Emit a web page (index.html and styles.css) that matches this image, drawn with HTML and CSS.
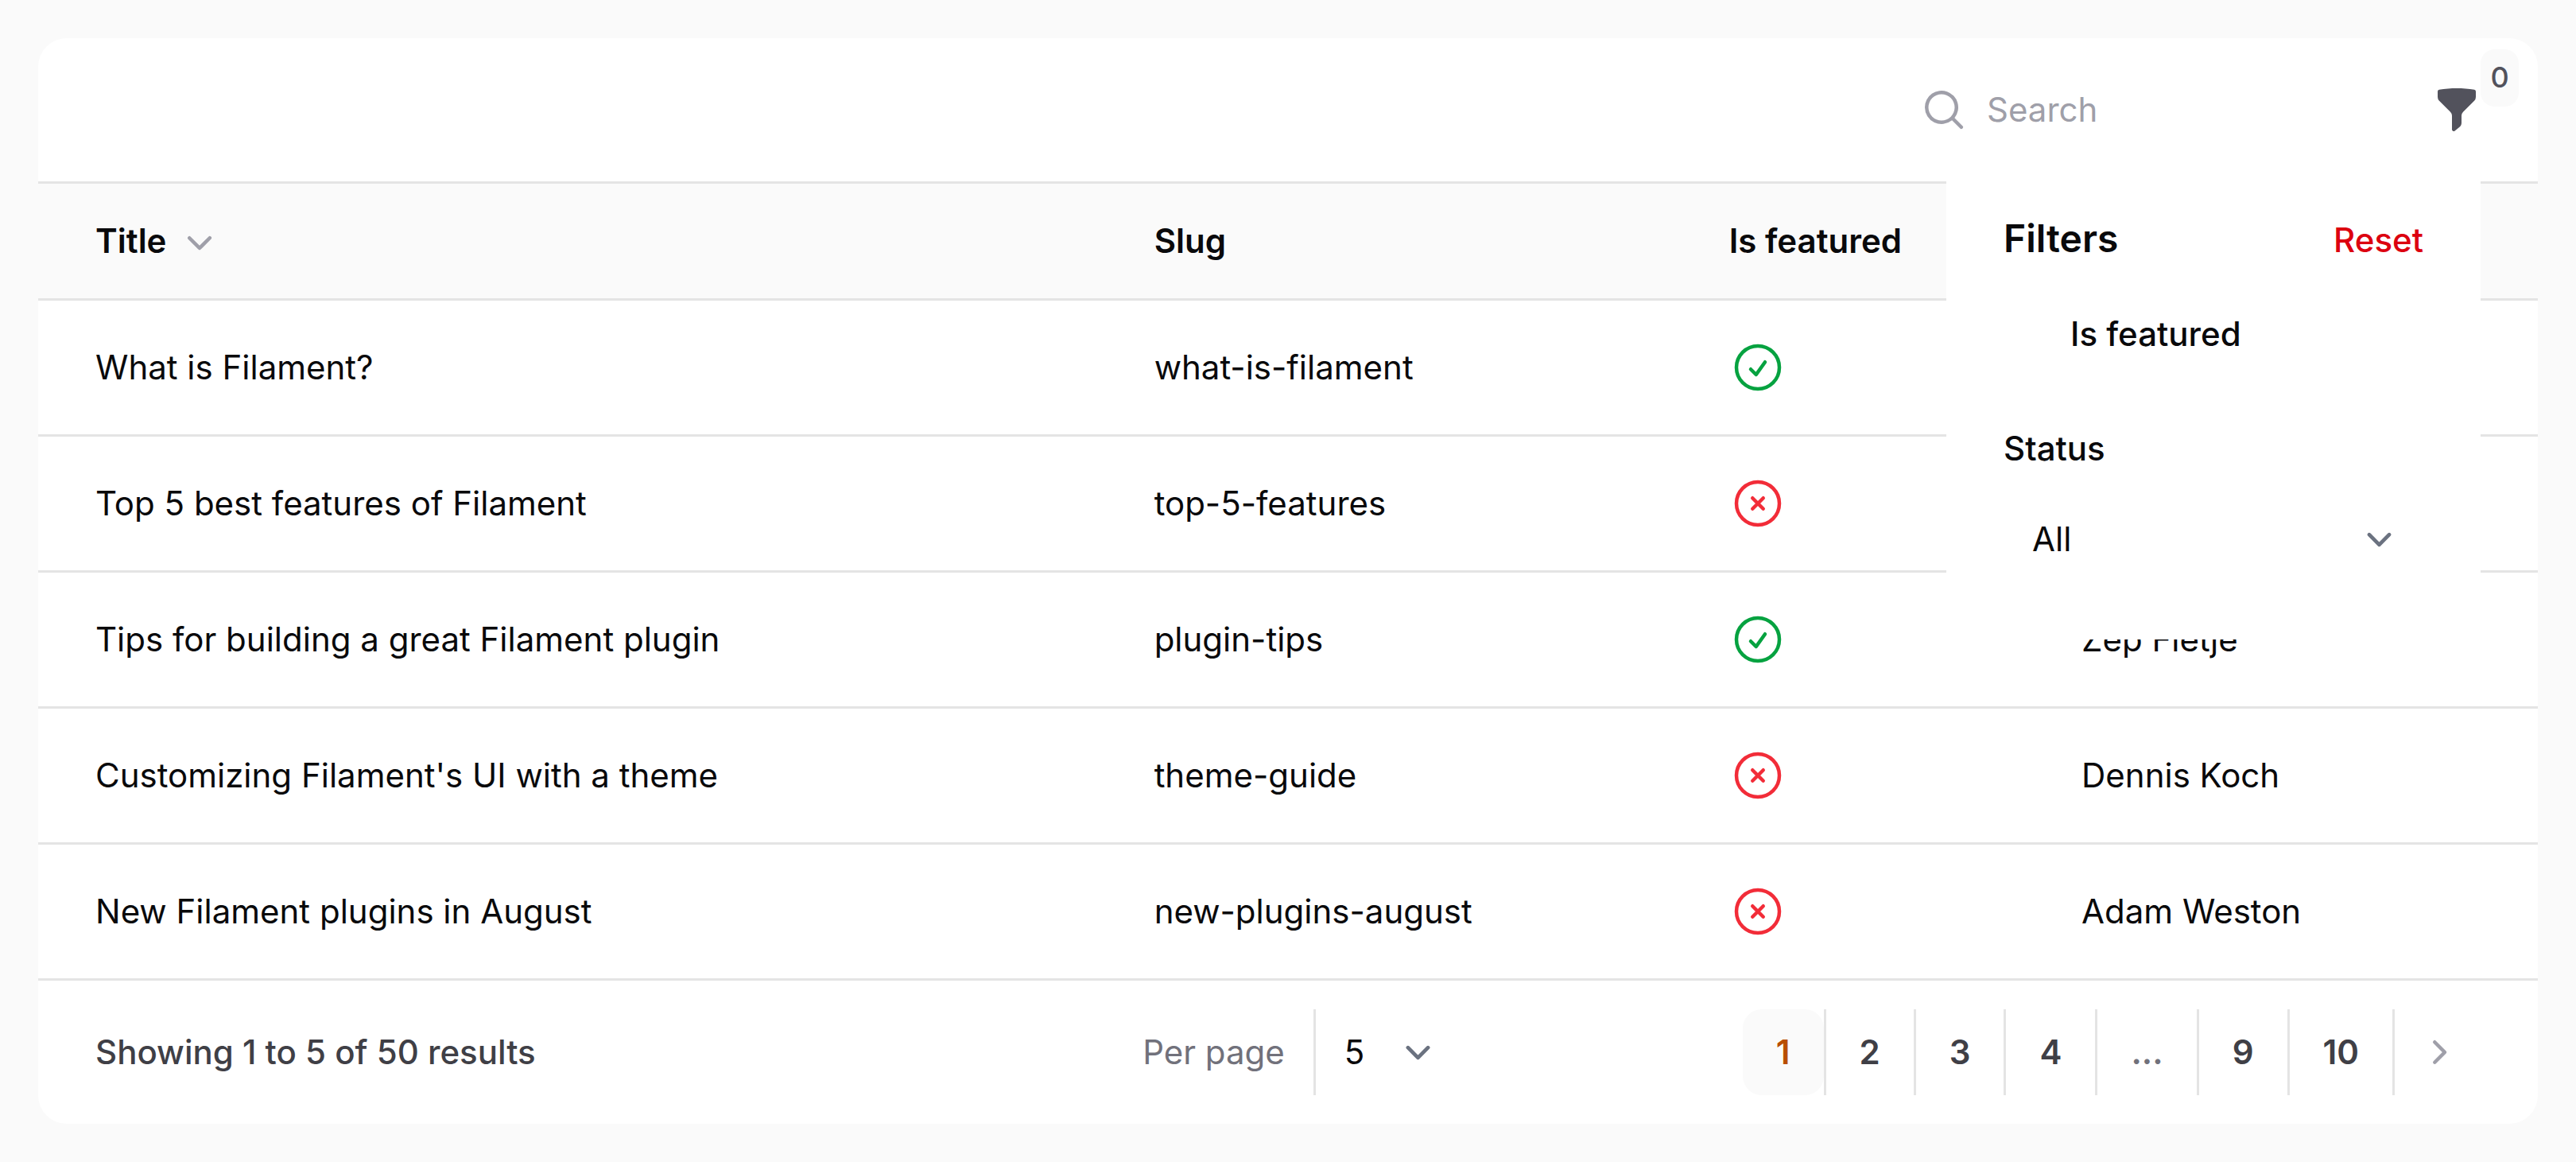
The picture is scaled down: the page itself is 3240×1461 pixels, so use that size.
FILE: index.html
```html
<!DOCTYPE html>
<html lang="en">
<head>
<meta charset="utf-8">
<meta name="viewport" content="width=device-width, initial-scale=1">
<title>Posts</title>
<link rel="stylesheet" href="styles.css">
</head>
<body>
<svg class="sprite" aria-hidden="true">
  <symbol id="check" viewBox="0 0 24 24"><path d="M9 12.75 11.25 15 15 9.75M21 12a9 9 0 1 1-18 0 9 9 0 0 1 18 0Z"/></symbol>
  <symbol id="cross" viewBox="0 0 24 24"><path d="m9.75 9.75 4.5 4.5m0-4.5-4.5 4.5M21 12a9 9 0 1 1-18 0 9 9 0 0 1 18 0Z"/></symbol>
  <symbol id="select-arrow" viewBox="0 0 20 20"><path d="m6 8 4 4 4-4"/></symbol>
</svg>
<main class="card">
  <div class="toolbar">
    <label class="search">
      <svg class="icon" viewBox="0 0 20 20" aria-hidden="true"><path fill-rule="evenodd" d="M9 3.5a5.5 5.5 0 1 0 0 11 5.5 5.5 0 0 0 0-11ZM2 9a7 7 0 1 1 12.452 4.391l3.328 3.329a.75.75 0 1 1-1.06 1.06l-3.329-3.328A7 7 0 0 1 2 9Z"/></svg>
      <input class="search-input" type="search" placeholder="Search" aria-label="Search">
    </label>
    <div class="filter">
      <button class="filter-button" type="button" aria-label="Filter" aria-expanded="true">
        <svg class="icon" viewBox="0 0 20 20" aria-hidden="true"><path d="M2.628 1.601C5.028 1.206 7.49 1 10 1s4.973.206 7.372.601a.75.75 0 0 1 .628.74v2.288a2.25 2.25 0 0 1-.659 1.59l-4.682 4.683a2.25 2.25 0 0 0-.659 1.59v3.037c0 .684-.31 1.33-.844 1.757l-1.937 1.55A.75.75 0 0 1 8 18.25v-5.757a2.25 2.25 0 0 0-.659-1.591L2.659 6.22A2.25 2.25 0 0 1 2 4.629V2.34a.75.75 0 0 1 .628-.74Z"/></svg>
        <span class="badge">0</span>
      </button>
      <section class="dropdown" aria-labelledby="filters-heading">
        <header class="dropdown-header">
          <h2 class="dropdown-title" id="filters-heading">Filters</h2>
          <button class="reset" type="button">Reset</button>
        </header>
        <label class="check-field">
          <input class="checkbox" type="checkbox">
          <span>Is featured</span>
        </label>
        <div class="select-field">
          <label class="field-label" for="status">Status</label>
          <div class="select-wrap">
            <select class="select" id="status"><option>All</option></select>
            <svg class="select-arrow" aria-hidden="true"><use href="#select-arrow"/></svg>
          </div>
        </div>
      </section>
    </div>
  </div>

  <table class="table">
    <colgroup><col class="col-title"><col class="col-slug"><col class="col-featured"><col></colgroup>
    <thead>
      <tr>
        <th scope="col"><button class="sort" type="button">Title
          <svg class="icon sort-icon" viewBox="0 0 20 20" aria-hidden="true"><path d="M5.22 8.22a.75.75 0 0 1 1.06 0L10 11.94l3.72-3.72a.75.75 0 1 1 1.06 1.06l-4.25 4.25a.75.75 0 0 1-1.06 0L5.22 9.28a.75.75 0 0 1 0-1.06Z"/></svg></button></th>
        <th scope="col">Slug</th>
        <th scope="col">Is featured</th>
        <td></td>
      </tr>
    </thead>
    <tbody>
      <tr>
        <td>What is Filament?</td>
        <td>what-is-filament</td>
        <td><svg class="state yes" role="img" aria-label="Yes"><use href="#check"/></svg></td>
        <td></td>
      </tr>
      <tr>
        <td>Top 5 best features of Filament</td>
        <td>top-5-features</td>
        <td><svg class="state no" role="img" aria-label="No"><use href="#cross"/></svg></td>
        <td></td>
      </tr>
      <tr>
        <td>Tips for building a great Filament plugin</td>
        <td>plugin-tips</td>
        <td><svg class="state yes" role="img" aria-label="Yes"><use href="#check"/></svg></td>
        <td>Zep Fietje</td>
      </tr>
      <tr>
        <td>Customizing Filament's UI with a theme</td>
        <td>theme-guide</td>
        <td><svg class="state no" role="img" aria-label="No"><use href="#cross"/></svg></td>
        <td>Dennis Koch</td>
      </tr>
      <tr>
        <td>New Filament plugins in August</td>
        <td>new-plugins-august</td>
        <td><svg class="state no" role="img" aria-label="No"><use href="#cross"/></svg></td>
        <td>Adam Weston</td>
      </tr>
    </tbody>
  </table>

  <footer class="footer">
    <span class="overview">Showing 1 to 5 of 50 results</span>
    <div class="per-page">
      <label class="per-page-label" for="per-page">Per page</label>
      <div class="select-wrap">
        <select class="select" id="per-page"><option>5</option></select>
        <svg class="select-arrow" aria-hidden="true"><use href="#select-arrow"/></svg>
      </div>
    </div>
    <nav class="pages" aria-label="Pagination">
      <a class="page current" href="#1" aria-current="page">1</a>
      <a class="page" href="#2">2</a>
      <a class="page" href="#3">3</a>
      <a class="page" href="#4">4</a>
      <span class="page ellipsis">...</span>
      <a class="page" href="#9">9</a>
      <a class="page" href="#10">10</a>
      <a class="page next" href="#2" aria-label="Next"><svg class="icon" viewBox="0 0 20 20" aria-hidden="true"><path d="M8.22 5.22a.75.75 0 0 1 1.06 0l4.25 4.25a.75.75 0 0 1 0 1.06l-4.25 4.25a.75.75 0 0 1-1.06-1.06L11.94 10 8.22 6.28a.75.75 0 0 1 0-1.06Z"/></svg></a>
    </nav>
  </footer>
</main>
</body>
</html>
```

FILE: styles.css
```css
*, *::before, *::after { box-sizing: border-box; }

body {
  margin: 0;
  padding: 48px;
  background: #fafafa;
  color: #09090b;
  font-family: Inter, "Liberation Sans", sans-serif;
  font-size: 42px;
  line-height: 72px;
  font-optical-sizing: none;
  -webkit-font-smoothing: antialiased;
}

button, input, select {
  margin: 0;
  padding: 0;
  border: 0;
  background: transparent;
  color: inherit;
  font: inherit;
  font-optical-sizing: inherit;
}

.sprite { display: none; }

.icon {
  display: block;
  flex: none;
  width: 60px;
  height: 60px;
  fill: currentColor;
}

.card { border-radius: 36px; background: #fff; }

/* Toolbar */
.toolbar {
  display: flex;
  justify-content: flex-end;
  align-items: center;
  gap: 48px;
  padding: 36px 72px;
}

.search {
  display: flex;
  align-items: center;
  gap: 24px;
  width: 633px;
  height: 108px;
  padding: 0 36px;
  color: #9f9fa9;
}

.search-input { flex: 1; min-width: 0; line-height: 72px; outline: 0; color: #09090b; }
.search-input::placeholder { color: #9f9fa9; opacity: 1; }

.filter { position: relative; }
.filter-button { display: block; padding: 24px 0; color: #52525c; }

.badge {
  position: absolute;
  top: -22px;
  left: 100%;
  min-width: 48px;
  height: 72px;
  border-radius: 18px;
  background: #fafafa;
  font-size: 36px;
  font-weight: 500;
  line-height: 70px;
  text-align: center;
}

.dropdown {
  position: absolute;
  z-index: 1;
  top: 100%;
  right: 0;
  width: 672px;
  padding: 72px;
  background: #fff;
}

.dropdown-header { display: flex; justify-content: space-between; align-items: baseline; margin-bottom: 48px; }
.dropdown-title { margin: 0; font-size: 48px; font-weight: 600; line-height: 72px; }
.reset { color: #dc000f; font-weight: 500; line-height: 60px; }

.check-field { display: flex; align-items: center; gap: 36px; margin-bottom: 72px; font-weight: 500; }
.checkbox { width: 48px; height: 48px; appearance: none; border-radius: 12px; }
.field-label { display: block; margin-bottom: 24px; font-weight: 500; }

/* The arrow shares the select's grid cell */
.select-wrap { display: grid; align-items: center; }
.select { grid-area: 1 / 1; width: 100%; height: 108px; padding: 0 96px 0 36px; appearance: none; }

.select-arrow {
  grid-area: 1 / 1;
  justify-self: end;
  width: 63px;
  height: 63px;
  margin-right: 24px;
  fill: none;
  stroke: #6b7280;
  stroke-width: 1.5;
  stroke-linecap: round;
  stroke-linejoin: round;
  pointer-events: none;
}

/* Table */
.table { width: 100%; table-layout: fixed; border-collapse: separate; border-spacing: 0; text-align: left; }
.col-title { width: 43.5%; }
.col-slug { width: 23%; }
.col-featured { width: 14.1%; }

.table th, .table td { padding: 48px 36px; border-top: 3px solid #e4e4e4; vertical-align: middle; }
.table th:first-child, .table td:first-child { padding-left: 72px; }
.table thead th, .table thead td { padding-top: 36px; padding-bottom: 36px; background: #fafafa; font-weight: 600; }

.sort { display: flex; align-items: center; gap: 12px; }
.sort-icon { color: #9f9fa9; }

.state {
  display: block;
  width: 72px;
  height: 72px;
  fill: none;
  stroke: currentColor;
  stroke-width: 1.5;
  stroke-linecap: round;
  stroke-linejoin: round;
}

.yes { color: #06a240; }
.no { color: #f22c38; }

/* Footer */
.footer {
  display: grid;
  grid-template-columns: 1fr auto 1fr;
  align-items: center;
  padding: 36px 72px;
  border-top: 3px solid #e4e4e4;
}

.overview { color: #3f3f46; font-weight: 500; }
.per-page { display: flex; align-items: center; }
.per-page-label { padding: 0 36px; color: #71717b; }
.per-page .select-wrap { width: 187px; border-left: 3px solid #e4e4e4; }

.pages { display: flex; justify-self: end; }

.page {
  padding: 18px 42px;
  border-left: 3px solid #e4e4e4;
  color: #3f3f46;
  font-weight: 600;
  text-decoration: none;
}

.current { border-left: 0; border-radius: 24px; background: #fafafa; color: #b84e00; }
.ellipsis { color: #71717b; }
.next { padding: 24px; color: #9f9fa9; }
```
